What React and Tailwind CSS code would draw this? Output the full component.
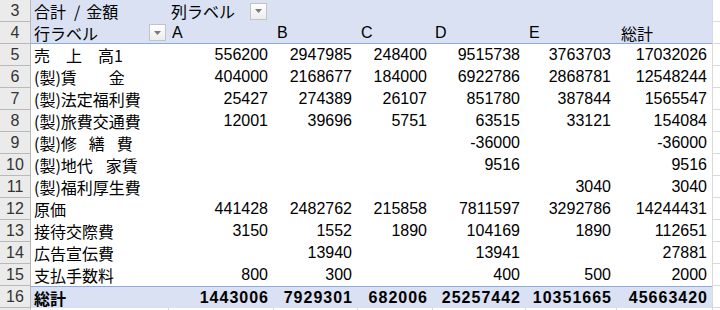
import React from 'react'

// Pivot table: 合計 / 金額 by 行ラベル x 列ラベル
const GRID = 'grid grid-cols-[31px_137px_105px_84px_75px_93px_91px_96px_1fr]'

const ROWS = [
  ['売\u3000上\u3000高1', [556200, 2947985, 248400, 9515738, 3763703, 17032026]],
  ['(製)賃\u3000\u3000金', [404000, 2168677, 184000, 6922786, 2868781, 12548244]],
  ['(製)法定福利費', [25427, 274389, 26107, 851780, 387844, 1565547]],
  ['(製)旅費交通費', [12001, 39696, 5751, 63515, 33121, 154084]],
  ['repair', ['', '', '', -36000, '', -36000]],
  ['rent', ['', '', '', 9516, '', 9516]],
  ['(製)福利厚生費', ['', '', '', '', 3040, 3040]],
  ['原価', [441428, 2482762, 215858, 7811597, 3292786, 14244431]],
  ['接待交際費', [3150, 1552, 1890, 104169, 1890, 112651]],
  ['広告宣伝費', ['', 13940, '', 13941, '', 27881]],
  ['支払手数料', [800, 300, '', 400, 500, 2000]],
]

const TOTALS = [1443006, 7929301, 682006, 25257442, 10351665, 45663420]

const jp = "font-['Noto_Sans_CJK_JP',sans-serif]"
const num = "font-['Liberation_Sans',Arial,sans-serif]"

function Label({ name }) {
  if (name === 'repair') {
    return (
      <span>
        (製)修<span className="inline-block w-[12px]" />繕<span className="inline-block w-[12px]" />費
      </span>
    )
  }
  if (name === 'rent') {
    return (
      <span>
        (製)地代<span className="inline-block w-[13px]" />家賃
      </span>
    )
  }
  return <span className="whitespace-pre">{name}</span>
}

function RowHead({ n }) {
  return (
    <div className={`flex items-center justify-center border-r border-b border-[#b9b9b9] bg-[#ebebeb] text-[16px] text-[#333] ${num}`}>
      {n}
    </div>
  )
}

function Filler() {
  return <div className="border-b border-l border-[#d9d9d9] bg-white" />
}

function DropButton() {
  return (
    <span className="flex h-[17px] w-[17px] items-center justify-center border border-[#c3c3c3] bg-gradient-to-b from-white to-[#ececec]">
      <svg width="7" height="4" viewBox="0 0 7 4">
        <path d="M0 0h7L3.5 4z" fill="#7a7a7a" />
      </svg>
    </span>
  )
}

export default function App() {
  return (
    <div className="h-[310px] w-[720px] overflow-hidden bg-white leading-[20px] text-black">
      {/* row 3 */}
      <div className={`${GRID} h-[22px]`}>
        <RowHead n={3} />
        <div className={`col-span-7 flex items-center bg-[#d9e1f2] ${jp} text-[16px]`}>
          <span className="flex w-[137px] pl-[3px]">
            <span>合計</span>
            <span className="ml-[8px]">/</span>
            <span className="ml-[6px]">金額</span>
          </span>
          <span className="flex w-[99px] items-center justify-between pl-[3px]">
            列ラベル
            <DropButton />
          </span>
        </div>
        <Filler />
      </div>

      {/* row 4 */}
      <div className={`${GRID} h-[22px]`}>
        <RowHead n={4} />
        <div className={`col-span-7 flex items-center border-b border-[#8ea9db] bg-[#d9e1f2] text-[16px]`}>
          <span className={`flex w-[137px] items-center justify-between pl-[3px] pr-[2px] ${jp}`}>
            行ラベル
            <DropButton />
          </span>
          <span className={`w-[105px] pl-[4px] ${num}`}>A</span>
          <span className={`w-[84px] pl-[4px] ${num}`}>B</span>
          <span className={`w-[75px] pl-[4px] ${num}`}>C</span>
          <span className={`w-[93px] pl-[3px] ${num}`}>D</span>
          <span className={`w-[91px] pl-[4px] ${num}`}>E</span>
          <span className={`w-[96px] pl-[5px] ${jp}`}>総計</span>
        </div>
        <Filler />
      </div>

      {ROWS.map(([name, vals], i) => (
        <div key={name} className={`${GRID} h-[22px]`}>
          <RowHead n={i + 5} />
          <div className={`flex items-center pl-[3px] text-[16px] ${jp}`}>
            <Label name={name} />
          </div>
          {vals.map((v, j) => (
            <div key={j} className={`flex items-center justify-end pr-[5px] text-[16px] ${num}`}>
              {v}
            </div>
          ))}
          <Filler />
        </div>
      ))}

      {/* row 16 totals */}
      <div className={`${GRID} h-[22px]`}>
        <RowHead n={16} />
        <div className={`col-span-7 grid grid-cols-[137px_105px_84px_75px_93px_91px_96px] border-t border-[#8ea9db] bg-[#d9e1f2] text-[16px] font-bold`}>
          <div className={`flex items-center pl-[3px] ${jp}`}>総計</div>
          {TOTALS.map((v, j) => (
            <div key={j} className={`flex items-center justify-end pr-[4px] tracking-[1px] ${num}`}>
              {v}
            </div>
          ))}
        </div>
        <Filler />
      </div>

      {/* row 17, partly visible */}
      <div className={`${GRID} h-[4px]`}>
        <div className="border-r border-[#b9b9b9] bg-[#ebebeb]" />
        <div />
        <div className="border-l border-[#d9d9d9]" />
        <div className="border-l border-[#d9d9d9]" />
        <div className="border-l border-[#d9d9d9]" />
        <div className="border-l border-[#d9d9d9]" />
        <div className="border-l border-[#d9d9d9]" />
        <div className="border-l border-[#d9d9d9]" />
        <div className="border-l border-[#d9d9d9]" />
      </div>
    </div>
  )
}
